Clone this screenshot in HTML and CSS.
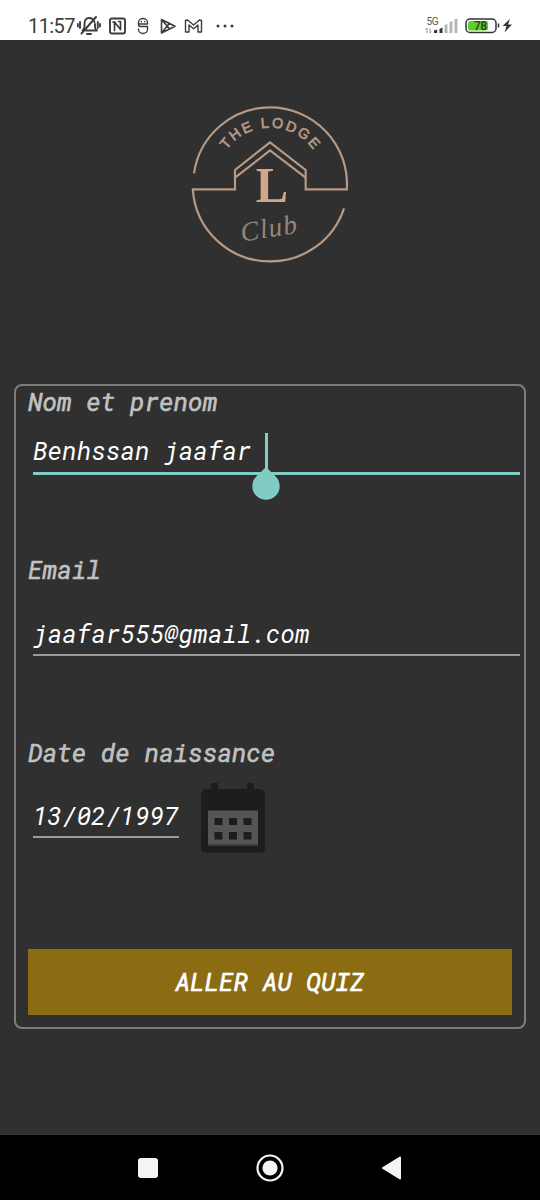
FILE: index.html
```html
<!DOCTYPE html>
<html lang="fr">
<head>
<meta charset="utf-8">
<title>The Lodge Club</title>
<link rel="stylesheet" href="styles.css">
</head>
<body>
<header class="status">
  <span class="clock">11:57</span>
  <svg class="status-left" viewBox="0 0 160 24" fill="none" stroke="#3c3c3c" stroke-width="1.6" stroke-linecap="round" stroke-linejoin="round">
    <path d="M5.500 16.500q2-1.500 2-4.500v-2q0-6 4.500-6t5.500 4M18 10v3q0 2 2 3.500H9M19 3L4.500 19.500M10 20h4M3 8v6M.8 10v2.500M20.800 8v6M23 10v2.500" stroke-width="1.900"/>
    <rect x="33" y="4.500" width="15" height="15" rx="2" stroke-width="1.900"/>
    <path d="M37.500 16.500V8l6 7.500V7.500M36 8h2M41.500 7.500h2" stroke-width="1.700"/>
    <path d="M70.500 10v-1.500a4.500 4 0 0 0-9 0V11q0 1.500 2 1.500h7v3a4.500 4 0 0 1-9 0V15M61.500 10h9M64.300 7.500v.2M67.700 7.500v.2" stroke-width="1.400"/>
    <path d="M84.500 5.500v13.500l13.500-6.700zM84.500 5.500l8 9.300M84.500 19l8-9.800" stroke-width="1.600"/>
    <path d="M108.500 18V6.500l2-.5 6 5 6-5 2 .5V18h-3.500v-7l-4.500 3.700-4.500-3.700v7z" stroke-width="1.400"/>
    <g fill="#3c3c3c" stroke="none"><circle cx="141" cy="12" r="1.500"/><circle cx="148" cy="12" r="1.500"/><circle cx="155" cy="12" r="1.500"/></g>
  </svg>
  <svg class="status-right" viewBox="0 0 92 24">
    <text class="net" x="2.500" y="10.500" textLength="12">5G</text>
    <path d="M3 14v5M1.500 15.500L3 14M6 19v-5M7.500 17.500L6 19" stroke="#999" fill="none"/>
    <path d="M10 19v-2.500l3.200-1V19zM15.500 19v-4l3-1.500V19z" fill="#333"/>
    <path d="M20.500 19v-8l2.900-1v9zM25.500 19V8l2.900-1v12zM30.500 19V5.500l2.900-1V19z" fill="#b5b5b5"/>
    <rect x="42" y="5" width="30" height="13.500" rx="4" fill="#fff" stroke="#333" stroke-width="1.500"/>
    <rect x="44" y="7" width="20" height="9.500" rx="2" fill="#62cc2c"/>
    <path d="M74.500 9.500v4" stroke="#333" stroke-width="1.500"/>
    <text class="battery" x="50" y="16" textLength="13">78</text>
    <path d="M86 5l-7.500 7h4l-2 6.500 7.500-8h-4z" fill="#333"/>
  </svg>
</header>

<main class="screen">
  <svg class="logo" viewBox="0 0 540 540" fill="none" stroke="#b69a86" stroke-width="6.500">
    <path d="M42 235A231 231 0 0 1 270 37A231 231 0 0 1 500.500 283H377V225L270 142L165 225V283H38.500A231 231 0 0 0 270 499A231 231 0 0 0 492 340"/>
    <path d="M165 248L270 166L377 248"/>
    <path id="arch" d="M113 227A160 160 0 0 1 427 227" stroke="none"/>
    <text class="logo-arch"><textPath href="#arch" startOffset="50%" textLength="303">THE LODGE</textPath></text>
    <text class="logo-initial" x="227" y="322" textLength="97" lengthAdjust="spacingAndGlyphs">L</text>
    <text class="logo-club" x="186" y="440" textLength="170" transform="rotate(-9 186 440)">Club</text>
  </svg>

  <form class="card">
    <div class="label label-name">Nom et prenom</div>
    <div class="field field-active">Benhssan jaafar<span class="caret"><svg class="handle" viewBox="0 0 28 34"><path d="M14 1L23.700 10.500A13.700 13.700 0 1 1 4.300 10.500Z" fill="#80cbc4"/></svg></span></div>
    <div class="label label-email">Email</div>
    <div class="field field-email">jaafar555@gmail.com</div>
    <div class="label label-date">Date de naissance</div>
    <div class="date-row">
      <div class="field field-date">13/02/1997</div>
      <svg class="calendar" viewBox="0 0 66 70">
        <path d="M11 0h7v6h29V0h7v6h5q6 0 6 6v51q0 6-6 6H7q-6 0-6-6V12q0-6 6-6h4z" fill="#1d1d1d"/>
        <rect x="1" y="56" width="64" height="13.500" rx="4" fill="#1d1d1d"/>
        <rect x="8" y="27.500" width="50" height="34.500" fill="#555"/>
        <path d="M8 61h50v2H8z" fill="#3c3c3c"/>
        <path d="M14.500 35h8v7h-8zM29 35h8v7h-8zM43.500 35h8v7h-8zM14.500 49h8v7.500h-8zM29 49h8v7.500h-8zM43.500 49h8v7.500h-8z" fill="#1d1d1d"/>
      </svg>
    </div>
    <button class="submit" type="button">ALLER AU QUIZ</button>
  </form>
</main>

<nav class="navbar">
  <svg viewBox="0 0 28 28"><rect x="4" y="4" width="20" height="20" rx="3" fill="#f4f4f4"/></svg>
  <svg viewBox="0 0 28 28"><circle cx="14" cy="14" r="12.500" fill="none" stroke="#f4f4f4" stroke-width="2.200"/><circle cx="14" cy="14" r="7.600" fill="#f4f4f4"/></svg>
  <svg viewBox="0 0 28 28"><path d="M22 3.500v21L5 14z" fill="#f4f4f4" stroke="#f4f4f4" stroke-width="2" stroke-linejoin="round"/></svg>
</nav>
</body>
</html>
```
FILE: styles.css
```css
* { box-sizing: border-box; }

body {
  margin: 0;
  width: 540px;
  height: 1200px;
  display: flex;
  flex-direction: column;
  background: #303030;
  font-family: "Roboto Mono", "DejaVu Sans Mono", monospace;
  overflow: hidden;
}

.status {
  height: 40px;
  padding: 14px 24px 2px 28px;
  display: flex;
  align-items: center;
  background: #fff;
  color: #3c3c3c;
}

.clock {
  width: 49px;
  font: 20px/24px Roboto, sans-serif;
  letter-spacing: -0.6px;
}

.status-left { width: 160px; height: 24px; }
.status-right { width: 92px; height: 24px; margin-left: auto; }
.net { font: 10px Roboto, sans-serif; fill: #555; }
.battery { font: 500 12px Roboto, sans-serif; fill: #263b1c; }

.screen {
  flex: 1;
  display: flex;
  flex-direction: column;
  align-items: center;
  padding: 55px 14px 0;
}

.logo { width: 180px; height: 180px; }
.logo text { fill: #b69a86; stroke: none; }
.logo .logo-arch { font: 500 43px "Liberation Sans", sans-serif; text-anchor: middle; stroke: #b69a86; stroke-width: 2; }
.logo .logo-initial { font: bold 153px "Liberation Serif", serif; fill: #d0a889; }
.logo .logo-club { font: italic 82px "Liberation Serif", serif; fill: #95867b; }

.card {
  width: 512px;
  height: 645px;
  margin-top: 109px;
  padding: 0 4px 0 12px;
  border: 2px solid #7d7d7d;
  border-radius: 8px;
  display: flex;
  flex-direction: column;
}

.label,
.field,
.submit {
  font-size: 24.800px;
  font-style: italic;
  line-height: 32px;
  white-space: pre;
}

.label { height: 32px; color: #c1c1c1; -webkit-text-stroke: 0.600px #c1c1c1; }

.field {
  height: 38px;
  margin-left: 5px;
  color: #fff;
  border-bottom: 2px solid #9b9b9b;
}

.field-active {
  display: flex;
  height: 40px;
  margin-top: 17px;
  border-bottom: 3px solid #80cbc4;
}

.caret {
  position: relative;
  width: 3px;
  height: 36px;
  margin: -2px 0 0 14px;
  background: #80cbc4;
}

.handle {
  position: absolute;
  top: 33px;
  left: -13px;
  width: 28px;
  height: 34px;
}

.label-email { margin-top: 79px; }
.field-email { margin-top: 32px; }
.label-date { margin-top: 81px; }

.date-row {
  display: flex;
  align-items: flex-start;
  margin-top: 14px;
  height: 70px;
}

.field-date { width: 146px; margin-top: 17px; }
.calendar { width: 66px; height: 70px; margin-left: 21px; }

.submit {
  width: 484px;
  height: 66px;
  margin-top: 96px;
  padding: 0;
  border: 0;
  background: #8b6c12;
  color: #fff;
  font-family: inherit;
  -webkit-text-stroke: 0.700px #fff;
}

.navbar {
  height: 65px;
  padding: 0 134px;
  display: flex;
  justify-content: space-between;
  align-items: center;
  background: #000;
}

.navbar svg { width: 28px; height: 28px; }
```
